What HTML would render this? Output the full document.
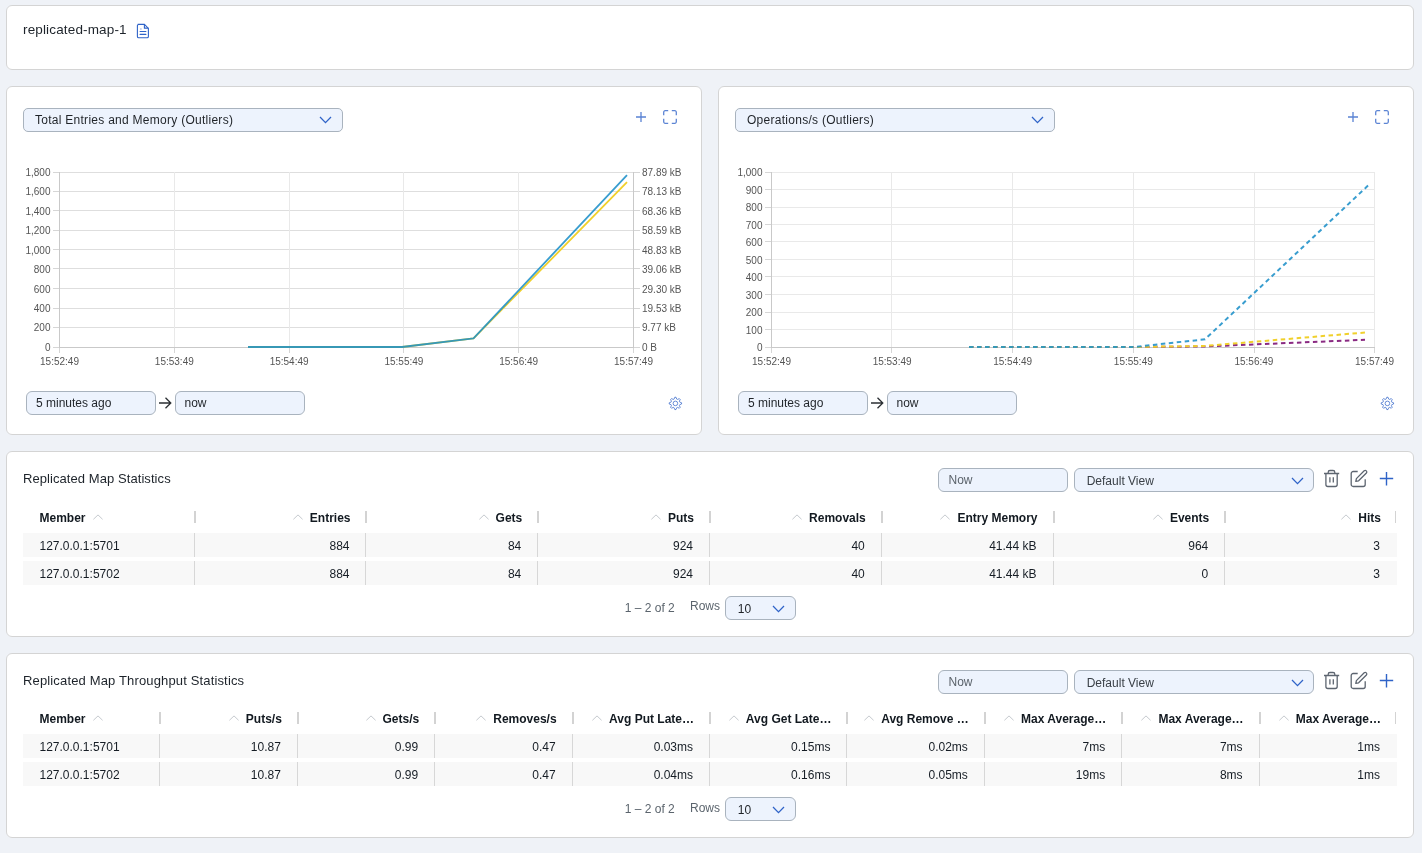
<!DOCTYPE html>
<html><head><meta charset="utf-8"><title>replicated-map-1</title>
<style>
html,body{margin:0;padding:0;}
body{width:1422px;height:853px;overflow:hidden;position:relative;background:#eff2f7;font-family:"Liberation Sans", sans-serif;}
</style></head><body><div style="position:absolute;left:0;top:0;width:1422px;height:853px;will-change:transform">
<div style="position:absolute;left:6px;top:5px;width:1408px;height:65px;background:#fff;border:1px solid #d4d4d4;border-radius:6px;box-sizing:border-box;"></div>
<div style="position:absolute;left:6px;top:86px;width:696px;height:349px;background:#fff;border:1px solid #d4d4d4;border-radius:6px;box-sizing:border-box;"></div>
<div style="position:absolute;left:718px;top:86px;width:696px;height:349px;background:#fff;border:1px solid #d4d4d4;border-radius:6px;box-sizing:border-box;"></div>
<div style="position:absolute;left:6px;top:451px;width:1408px;height:186px;background:#fff;border:1px solid #d4d4d4;border-radius:6px;box-sizing:border-box;"></div>
<div style="position:absolute;left:6px;top:653px;width:1408px;height:185px;background:#fff;border:1px solid #d4d4d4;border-radius:6px;box-sizing:border-box;"></div>
<div style="position:absolute;top:22.57px;font-size:13.5px;line-height:13.5px;color:#1d232a;font-weight:normal;white-space:nowrap;letter-spacing:0.15px;left:23px;">replicated-map-1</div>
<svg style="position:absolute;left:136px;top:23px;" width="14" height="16" viewBox="0 0 14 16"><path d="M1.7,1.4 H8.4 L12.4,5.4 V13.4 A1.3,1.3 0 0 1 11.1,14.7 H2.7 A1.3,1.3 0 0 1 1.4,13.4 V2.7 A1.3,1.3 0 0 1 2.7,1.4 Z" fill="none" stroke="#2f63c8" stroke-width="1.1"/>
<path d="M8.4,1.4 V5.1 H12.4" fill="none" stroke="#2f63c8" stroke-width="1.1"/>
<line x1="4.1" y1="8.5" x2="9.9" y2="8.5" stroke="#2f63c8" stroke-width="1.1" stroke-linecap="round"/>
<line x1="4.1" y1="11.4" x2="9.9" y2="11.4" stroke="#2f63c8" stroke-width="1.1" stroke-linecap="round"/>
<rect x="4.3" y="5.4" width="1.2" height="1.2" fill="#2f63c8" opacity="0.6"/></svg>
<div style="position:absolute;left:23px;top:108px;width:320px;height:24px;background:#edf3fd;border:1px solid #a9b3be;border-radius:5px;box-sizing:border-box;"></div>
<div style="position:absolute;top:113.84px;font-size:12px;line-height:12px;color:#1f2328;font-weight:normal;white-space:nowrap;letter-spacing:0.27px;left:35px;">Total Entries and Memory (Outliers)</div>
<svg style="position:absolute;left:318.0px;top:114.8px;" width="15" height="9.6" viewBox="0 0 15 9.6"><polyline points="2,2 7.5,7.6 13,2" fill="none" stroke="#2f63c8" stroke-width="1.3"/></svg>
<svg style="position:absolute;left:634px;top:110px;" width="14" height="14" viewBox="0 0 14 14"><path d="M7,2 V12 M2,7 H12" stroke="#2f63c8" stroke-width="1.3" fill="none" opacity="0.8"/></svg>
<svg style="position:absolute;left:662px;top:109px;" width="16" height="16" viewBox="0 0 16 16"><path d="M1.7,6.2 V3.2 A1.5,1.5 0 0 1 3.2,1.7 H6.2 M9.8,1.7 H12.8 A1.5,1.5 0 0 1 14.3,3.2 V6.2 M14.3,9.8 V12.8 A1.5,1.5 0 0 1 12.8,14.3 H9.8 M6.2,14.3 H3.2 A1.5,1.5 0 0 1 1.7,12.8 V9.8" stroke="#2f63c8" stroke-width="1.3" fill="none" opacity="0.78"/></svg>
<div style="position:absolute;left:26px;top:391px;width:130px;height:24px;background:#edf3fd;border:1px solid #a9b3be;border-radius:6px;box-sizing:border-box;"></div>
<div style="position:absolute;top:397.24px;font-size:12px;line-height:12px;color:#1f2328;font-weight:normal;white-space:nowrap;left:36px;">5 minutes ago</div>
<svg style="position:absolute;left:157px;top:396px;" width="16" height="14" viewBox="0 0 16 14"><path d="M2,7 H14 M8.5,1.8 L13.8,7 L8.5,12.2" stroke="#2b2f33" stroke-width="1.3" fill="none"/></svg>
<div style="position:absolute;left:175px;top:391px;width:130px;height:24px;background:#edf3fd;border:1px solid #a9b3be;border-radius:6px;box-sizing:border-box;"></div>
<div style="position:absolute;top:397.24px;font-size:12px;line-height:12px;color:#1f2328;font-weight:normal;white-space:nowrap;left:184.5px;">now</div>
<svg style="position:absolute;left:667px;top:395px;" width="17" height="17" viewBox="0 0 17 17"><polygon points="7.79,2.23 9.01,2.23 9.71,4.09 10.52,4.43 12.33,3.61 13.19,4.47 12.37,6.28 12.71,7.09 14.57,7.79 14.57,9.01 12.71,9.71 12.37,10.52 13.19,12.33 12.33,13.19 10.52,12.37 9.71,12.71 9.01,14.57 7.79,14.57 7.09,12.71 6.28,12.37 4.47,13.19 3.61,12.33 4.43,10.52 4.09,9.71 2.23,9.01 2.23,7.79 4.09,7.09 4.43,6.28 3.61,4.47 4.47,3.61 6.28,4.43 7.09,4.09" fill="none" stroke="#2f63c8" stroke-width="1" stroke-linejoin="round" opacity="0.72"/><circle cx="8.4" cy="8.4" r="2.3" fill="none" stroke="#2f63c8" stroke-width="1" opacity="0.72"/></svg>
<div style="position:absolute;left:735px;top:108px;width:320px;height:24px;background:#edf3fd;border:1px solid #a9b3be;border-radius:5px;box-sizing:border-box;"></div>
<div style="position:absolute;top:113.84px;font-size:12px;line-height:12px;color:#1f2328;font-weight:normal;white-space:nowrap;letter-spacing:0.27px;left:747px;">Operations/s (Outliers)</div>
<svg style="position:absolute;left:1030.0px;top:114.8px;" width="15" height="9.6" viewBox="0 0 15 9.6"><polyline points="2,2 7.5,7.6 13,2" fill="none" stroke="#2f63c8" stroke-width="1.3"/></svg>
<svg style="position:absolute;left:1346px;top:110px;" width="14" height="14" viewBox="0 0 14 14"><path d="M7,2 V12 M2,7 H12" stroke="#2f63c8" stroke-width="1.3" fill="none" opacity="0.8"/></svg>
<svg style="position:absolute;left:1374px;top:109px;" width="16" height="16" viewBox="0 0 16 16"><path d="M1.7,6.2 V3.2 A1.5,1.5 0 0 1 3.2,1.7 H6.2 M9.8,1.7 H12.8 A1.5,1.5 0 0 1 14.3,3.2 V6.2 M14.3,9.8 V12.8 A1.5,1.5 0 0 1 12.8,14.3 H9.8 M6.2,14.3 H3.2 A1.5,1.5 0 0 1 1.7,12.8 V9.8" stroke="#2f63c8" stroke-width="1.3" fill="none" opacity="0.78"/></svg>
<div style="position:absolute;left:738px;top:391px;width:130px;height:24px;background:#edf3fd;border:1px solid #a9b3be;border-radius:6px;box-sizing:border-box;"></div>
<div style="position:absolute;top:397.24px;font-size:12px;line-height:12px;color:#1f2328;font-weight:normal;white-space:nowrap;left:748px;">5 minutes ago</div>
<svg style="position:absolute;left:869px;top:396px;" width="16" height="14" viewBox="0 0 16 14"><path d="M2,7 H14 M8.5,1.8 L13.8,7 L8.5,12.2" stroke="#2b2f33" stroke-width="1.3" fill="none"/></svg>
<div style="position:absolute;left:887px;top:391px;width:130px;height:24px;background:#edf3fd;border:1px solid #a9b3be;border-radius:6px;box-sizing:border-box;"></div>
<div style="position:absolute;top:397.24px;font-size:12px;line-height:12px;color:#1f2328;font-weight:normal;white-space:nowrap;left:896.5px;">now</div>
<svg style="position:absolute;left:1379px;top:395px;" width="17" height="17" viewBox="0 0 17 17"><polygon points="7.79,2.23 9.01,2.23 9.71,4.09 10.52,4.43 12.33,3.61 13.19,4.47 12.37,6.28 12.71,7.09 14.57,7.79 14.57,9.01 12.71,9.71 12.37,10.52 13.19,12.33 12.33,13.19 10.52,12.37 9.71,12.71 9.01,14.57 7.79,14.57 7.09,12.71 6.28,12.37 4.47,13.19 3.61,12.33 4.43,10.52 4.09,9.71 2.23,9.01 2.23,7.79 4.09,7.09 4.43,6.28 3.61,4.47 4.47,3.61 6.28,4.43 7.09,4.09" fill="none" stroke="#2f63c8" stroke-width="1" stroke-linejoin="round" opacity="0.72"/><circle cx="8.4" cy="8.4" r="2.3" fill="none" stroke="#2f63c8" stroke-width="1" opacity="0.72"/></svg>
<svg style="position:absolute;left:0;top:0;font-family:"Liberation Sans", sans-serif" width="1422" height="853"><rect x="59" y="172" width="575" height="1" fill="#dedede"/><rect x="53" y="172" width="6" height="1" fill="#d6d6d6"/><rect x="634" y="172" width="6" height="1" fill="#d6d6d6"/><rect x="59" y="191" width="575" height="1" fill="#dedede"/><rect x="53" y="191" width="6" height="1" fill="#d6d6d6"/><rect x="634" y="191" width="6" height="1" fill="#d6d6d6"/><rect x="59" y="210" width="575" height="1" fill="#dedede"/><rect x="53" y="210" width="6" height="1" fill="#d6d6d6"/><rect x="634" y="210" width="6" height="1" fill="#d6d6d6"/><rect x="59" y="230" width="575" height="1" fill="#dedede"/><rect x="53" y="230" width="6" height="1" fill="#d6d6d6"/><rect x="634" y="230" width="6" height="1" fill="#d6d6d6"/><rect x="59" y="249" width="575" height="1" fill="#dedede"/><rect x="53" y="249" width="6" height="1" fill="#d6d6d6"/><rect x="634" y="249" width="6" height="1" fill="#d6d6d6"/><rect x="59" y="268" width="575" height="1" fill="#dedede"/><rect x="53" y="268" width="6" height="1" fill="#d6d6d6"/><rect x="634" y="268" width="6" height="1" fill="#d6d6d6"/><rect x="59" y="288" width="575" height="1" fill="#dedede"/><rect x="53" y="288" width="6" height="1" fill="#d6d6d6"/><rect x="634" y="288" width="6" height="1" fill="#d6d6d6"/><rect x="59" y="308" width="575" height="1" fill="#dedede"/><rect x="53" y="308" width="6" height="1" fill="#d6d6d6"/><rect x="634" y="308" width="6" height="1" fill="#d6d6d6"/><rect x="59" y="327" width="575" height="1" fill="#dedede"/><rect x="53" y="327" width="6" height="1" fill="#d6d6d6"/><rect x="634" y="327" width="6" height="1" fill="#d6d6d6"/><rect x="53" y="347" width="6" height="1" fill="#d6d6d6"/><rect x="634" y="347" width="6" height="1" fill="#d6d6d6"/><rect x="174" y="172" width="1" height="175" fill="#e9e9e9"/><rect x="289" y="172" width="1" height="175" fill="#e9e9e9"/><rect x="403" y="172" width="1" height="175" fill="#e9e9e9"/><rect x="518" y="172" width="1" height="175" fill="#e9e9e9"/><rect x="59" y="348" width="1" height="5" fill="#d6d6d6"/><rect x="174" y="348" width="1" height="5" fill="#d6d6d6"/><rect x="289" y="348" width="1" height="5" fill="#d6d6d6"/><rect x="403" y="348" width="1" height="5" fill="#d6d6d6"/><rect x="518" y="348" width="1" height="5" fill="#d6d6d6"/><rect x="633" y="348" width="1" height="5" fill="#d6d6d6"/><rect x="59" y="172" width="1" height="176" fill="#c9c9c9"/><rect x="633" y="172" width="1" height="176" fill="#c9c9c9"/><rect x="59" y="347" width="575" height="1" fill="#c9c9c9"/><text x="50.5" y="176.0" text-anchor="end" font-size="10" fill="#555555">1,800</text><text x="50.5" y="195.4" text-anchor="end" font-size="10" fill="#555555">1,600</text><text x="50.5" y="214.9" text-anchor="end" font-size="10" fill="#555555">1,400</text><text x="50.5" y="234.3" text-anchor="end" font-size="10" fill="#555555">1,200</text><text x="50.5" y="253.7" text-anchor="end" font-size="10" fill="#555555">1,000</text><text x="50.5" y="273.2" text-anchor="end" font-size="10" fill="#555555">800</text><text x="50.5" y="292.6" text-anchor="end" font-size="10" fill="#555555">600</text><text x="50.5" y="312.0" text-anchor="end" font-size="10" fill="#555555">400</text><text x="50.5" y="331.4" text-anchor="end" font-size="10" fill="#555555">200</text><text x="50.5" y="350.9" text-anchor="end" font-size="10" fill="#555555">0</text><text x="642" y="176.0" text-anchor="start" font-size="10" fill="#555555">87.89 kB</text><text x="642" y="195.4" text-anchor="start" font-size="10" fill="#555555">78.13 kB</text><text x="642" y="214.9" text-anchor="start" font-size="10" fill="#555555">68.36 kB</text><text x="642" y="234.3" text-anchor="start" font-size="10" fill="#555555">58.59 kB</text><text x="642" y="253.7" text-anchor="start" font-size="10" fill="#555555">48.83 kB</text><text x="642" y="273.2" text-anchor="start" font-size="10" fill="#555555">39.06 kB</text><text x="642" y="292.6" text-anchor="start" font-size="10" fill="#555555">29.30 kB</text><text x="642" y="312.0" text-anchor="start" font-size="10" fill="#555555">19.53 kB</text><text x="642" y="331.4" text-anchor="start" font-size="10" fill="#555555">9.77 kB</text><text x="642" y="350.9" text-anchor="start" font-size="10" fill="#555555">0 B</text><text x="59.5" y="365" text-anchor="middle" font-size="10" fill="#555555">15:52:49</text><text x="174.3" y="365" text-anchor="middle" font-size="10" fill="#555555">15:53:49</text><text x="289.1" y="365" text-anchor="middle" font-size="10" fill="#555555">15:54:49</text><text x="403.9" y="365" text-anchor="middle" font-size="10" fill="#555555">15:55:49</text><text x="518.7" y="365" text-anchor="middle" font-size="10" fill="#555555">15:56:49</text><text x="633.5" y="365" text-anchor="middle" font-size="10" fill="#555555">15:57:49</text><rect x="771" y="172" width="604" height="1" fill="#e9e9e9"/><rect x="765" y="172" width="6" height="1" fill="#d6d6d6"/><rect x="771" y="189" width="604" height="1" fill="#e9e9e9"/><rect x="765" y="189" width="6" height="1" fill="#d6d6d6"/><rect x="771" y="207" width="604" height="1" fill="#e9e9e9"/><rect x="765" y="207" width="6" height="1" fill="#d6d6d6"/><rect x="771" y="224" width="604" height="1" fill="#e9e9e9"/><rect x="765" y="224" width="6" height="1" fill="#d6d6d6"/><rect x="771" y="241" width="604" height="1" fill="#e9e9e9"/><rect x="765" y="241" width="6" height="1" fill="#d6d6d6"/><rect x="771" y="259" width="604" height="1" fill="#e9e9e9"/><rect x="765" y="259" width="6" height="1" fill="#d6d6d6"/><rect x="771" y="276" width="604" height="1" fill="#e9e9e9"/><rect x="765" y="276" width="6" height="1" fill="#d6d6d6"/><rect x="771" y="294" width="604" height="1" fill="#e9e9e9"/><rect x="765" y="294" width="6" height="1" fill="#d6d6d6"/><rect x="771" y="312" width="604" height="1" fill="#e9e9e9"/><rect x="765" y="312" width="6" height="1" fill="#d6d6d6"/><rect x="771" y="329" width="604" height="1" fill="#e9e9e9"/><rect x="765" y="329" width="6" height="1" fill="#d6d6d6"/><rect x="765" y="347" width="6" height="1" fill="#d6d6d6"/><rect x="891" y="172" width="1" height="175" fill="#e9e9e9"/><rect x="1012" y="172" width="1" height="175" fill="#e9e9e9"/><rect x="1133" y="172" width="1" height="175" fill="#e9e9e9"/><rect x="1254" y="172" width="1" height="175" fill="#e9e9e9"/><rect x="771" y="348" width="1" height="5" fill="#d6d6d6"/><rect x="891" y="348" width="1" height="5" fill="#d6d6d6"/><rect x="1012" y="348" width="1" height="5" fill="#d6d6d6"/><rect x="1133" y="348" width="1" height="5" fill="#d6d6d6"/><rect x="1254" y="348" width="1" height="5" fill="#d6d6d6"/><rect x="1374" y="348" width="1" height="5" fill="#d6d6d6"/><rect x="1374" y="172" width="1" height="175" fill="#e9e9e9"/><rect x="771" y="172" width="1" height="176" fill="#c9c9c9"/><rect x="771" y="347" width="604" height="1" fill="#c9c9c9"/><text x="762.5" y="176.0" text-anchor="end" font-size="10" fill="#555555">1,000</text><text x="762.5" y="193.5" text-anchor="end" font-size="10" fill="#555555">900</text><text x="762.5" y="211.0" text-anchor="end" font-size="10" fill="#555555">800</text><text x="762.5" y="228.5" text-anchor="end" font-size="10" fill="#555555">700</text><text x="762.5" y="246.0" text-anchor="end" font-size="10" fill="#555555">600</text><text x="762.5" y="263.5" text-anchor="end" font-size="10" fill="#555555">500</text><text x="762.5" y="281.0" text-anchor="end" font-size="10" fill="#555555">400</text><text x="762.5" y="298.5" text-anchor="end" font-size="10" fill="#555555">300</text><text x="762.5" y="316.0" text-anchor="end" font-size="10" fill="#555555">200</text><text x="762.5" y="333.5" text-anchor="end" font-size="10" fill="#555555">100</text><text x="762.5" y="351.0" text-anchor="end" font-size="10" fill="#555555">0</text><text x="771.5" y="365" text-anchor="middle" font-size="10" fill="#555555">15:52:49</text><text x="892.1" y="365" text-anchor="middle" font-size="10" fill="#555555">15:53:49</text><text x="1012.7" y="365" text-anchor="middle" font-size="10" fill="#555555">15:54:49</text><text x="1133.3" y="365" text-anchor="middle" font-size="10" fill="#555555">15:55:49</text><text x="1253.9" y="365" text-anchor="middle" font-size="10" fill="#555555">15:56:49</text><text x="1374.5" y="365" text-anchor="middle" font-size="10" fill="#555555">15:57:49</text><polyline points="248,347 402,347 473.5,338.4 627,182.2" fill="none" stroke="#f0d02c" stroke-width="1.8" stroke-linejoin="round"/><polyline points="248,347 402,347 473.5,338.4 627,175.2" fill="none" stroke="#1c90c8" stroke-width="1.8" stroke-linejoin="round" stroke-opacity="0.88"/><polyline points="969,347 1134,347 1204,346.5 1365,339.8" fill="none" stroke="#8a2a82" stroke-width="2" stroke-dasharray="4.5,3.5"/><polyline points="969,347 1134,347 1204,346 1365,332.5" fill="none" stroke="#f0d02c" stroke-width="2" stroke-dasharray="4.5,3.5"/><polyline points="969,347 1134,347 1205,339.3 1368,185.6" fill="none" stroke="#1c90c8" stroke-width="2" stroke-dasharray="4.5,3.5" stroke-opacity="0.88"/></svg>
<div style="position:absolute;top:472.40px;font-size:13px;line-height:13px;color:#1d232a;font-weight:normal;white-space:nowrap;letter-spacing:0.07px;left:23px;">Replicated Map Statistics</div>
<div style="position:absolute;left:938px;top:468px;width:130px;height:24px;background:#edf3fd;border:1px solid #a9b3be;border-radius:6px;box-sizing:border-box;"></div>
<div style="position:absolute;top:474.24px;font-size:12px;line-height:12px;color:#5b636b;font-weight:normal;white-space:nowrap;left:948.5px;">Now</div>
<div style="position:absolute;left:1074px;top:468px;width:240px;height:24px;background:#edf3fd;border:1px solid #a9b3be;border-radius:6px;box-sizing:border-box;"></div>
<div style="position:absolute;top:474.54px;font-size:12px;line-height:12px;color:#3a4047;font-weight:normal;white-space:nowrap;left:1086.7px;">Default View</div>
<svg style="position:absolute;left:1290.0px;top:475.7px;" width="15" height="9.6" viewBox="0 0 15 9.6"><polyline points="2,2 7.5,7.6 13,2" fill="none" stroke="#2f63c8" stroke-width="1.3"/></svg>
<svg style="position:absolute;left:1322px;top:468px;" width="20" height="20" viewBox="0 0 20 20"><path d="M2,5.5 H17.2 M6.2,5.5 V4.3 A1.8,1.8 0 0 1 8,2.5 H11 A1.8,1.8 0 0 1 12.8,4.3 V5.5 M3.9,5.5 V16.5 A2,2 0 0 0 5.9,18.5 H13.2 A2,2 0 0 0 15.2,16.5 V5.5 M7.9,9.3 V14.6 M11.3,9.3 V14.6" stroke="#5d6570" stroke-width="1.3" fill="none"/></svg>
<svg style="position:absolute;left:1348px;top:468px;" width="22" height="20" viewBox="0 0 22 20"><path d="M9.7,3.5 H5.2 A2,2 0 0 0 3.2,5.5 V16.5 A2,2 0 0 0 5.2,18.5 H15.2 A2,2 0 0 0 17.2,16.5 V11.2 M7.8,13.3 L8.4,10.6 L16.2,2.8 A1.56,1.56 0 0 1 18.4,5.0 L10.6,12.8 Z" stroke="#5d6570" stroke-width="1.3" fill="none" stroke-linejoin="round"/></svg>
<svg style="position:absolute;left:1378px;top:470px;" width="17" height="17" viewBox="0 0 17 17"><path d="M8.5,2 V15.5 M1.8,8.5 H15.2" stroke="#2f63c8" stroke-width="1.4" fill="none"/></svg>
<div style="position:absolute;left:194px;top:511px;width:2px;height:12px;background:#d3d3d3;"></div>
<div style="position:absolute;top:511.64px;font-size:12px;line-height:12px;color:#121920;font-weight:bold;white-space:nowrap;left:39.5px;">Member<span style="display:inline-block;width:7px"></span><svg width="10" height="6" viewBox="0 0 10 6" style="vertical-align:2px"><polyline points="0.4,5.3 5,0.9 9.6,5.3" fill="none" stroke="#c5c9ce" stroke-width="1"/></svg></div>
<div style="position:absolute;left:365px;top:511px;width:2px;height:12px;background:#d3d3d3;"></div>
<div style="position:absolute;top:511.64px;font-size:12px;line-height:12px;color:#121920;font-weight:bold;white-space:nowrap;right:1071.5px;"><svg width="10" height="6" viewBox="0 0 10 6" style="vertical-align:2px"><polyline points="0.4,5.3 5,0.9 9.6,5.3" fill="none" stroke="#c5c9ce" stroke-width="1"/></svg><span style="display:inline-block;width:7px"></span>Entries</div>
<div style="position:absolute;left:537px;top:511px;width:2px;height:12px;background:#d3d3d3;"></div>
<div style="position:absolute;top:511.64px;font-size:12px;line-height:12px;color:#121920;font-weight:bold;white-space:nowrap;right:899.75px;"><svg width="10" height="6" viewBox="0 0 10 6" style="vertical-align:2px"><polyline points="0.4,5.3 5,0.9 9.6,5.3" fill="none" stroke="#c5c9ce" stroke-width="1"/></svg><span style="display:inline-block;width:7px"></span>Gets</div>
<div style="position:absolute;left:709px;top:511px;width:2px;height:12px;background:#d3d3d3;"></div>
<div style="position:absolute;top:511.64px;font-size:12px;line-height:12px;color:#121920;font-weight:bold;white-space:nowrap;right:728.0px;"><svg width="10" height="6" viewBox="0 0 10 6" style="vertical-align:2px"><polyline points="0.4,5.3 5,0.9 9.6,5.3" fill="none" stroke="#c5c9ce" stroke-width="1"/></svg><span style="display:inline-block;width:7px"></span>Puts</div>
<div style="position:absolute;left:881px;top:511px;width:2px;height:12px;background:#d3d3d3;"></div>
<div style="position:absolute;top:511.64px;font-size:12px;line-height:12px;color:#121920;font-weight:bold;white-space:nowrap;right:556.25px;"><svg width="10" height="6" viewBox="0 0 10 6" style="vertical-align:2px"><polyline points="0.4,5.3 5,0.9 9.6,5.3" fill="none" stroke="#c5c9ce" stroke-width="1"/></svg><span style="display:inline-block;width:7px"></span>Removals</div>
<div style="position:absolute;left:1053px;top:511px;width:2px;height:12px;background:#d3d3d3;"></div>
<div style="position:absolute;top:511.64px;font-size:12px;line-height:12px;color:#121920;font-weight:bold;white-space:nowrap;right:384.5px;"><svg width="10" height="6" viewBox="0 0 10 6" style="vertical-align:2px"><polyline points="0.4,5.3 5,0.9 9.6,5.3" fill="none" stroke="#c5c9ce" stroke-width="1"/></svg><span style="display:inline-block;width:7px"></span>Entry Memory</div>
<div style="position:absolute;left:1224px;top:511px;width:2px;height:12px;background:#d3d3d3;"></div>
<div style="position:absolute;top:511.64px;font-size:12px;line-height:12px;color:#121920;font-weight:bold;white-space:nowrap;right:212.75px;"><svg width="10" height="6" viewBox="0 0 10 6" style="vertical-align:2px"><polyline points="0.4,5.3 5,0.9 9.6,5.3" fill="none" stroke="#c5c9ce" stroke-width="1"/></svg><span style="display:inline-block;width:7px"></span>Events</div>
<div style="position:absolute;left:1395px;top:511px;width:1px;height:12px;background:#d3d3d3;"></div>
<div style="position:absolute;top:511.64px;font-size:12px;line-height:12px;color:#121920;font-weight:bold;white-space:nowrap;right:41.0px;"><svg width="10" height="6" viewBox="0 0 10 6" style="vertical-align:2px"><polyline points="0.4,5.3 5,0.9 9.6,5.3" fill="none" stroke="#c5c9ce" stroke-width="1"/></svg><span style="display:inline-block;width:7px"></span>Hits</div>
<div style="position:absolute;left:23px;top:533px;width:1374px;height:24px;background:#f8f8f8;"></div>
<div style="position:absolute;left:194px;top:533px;width:1px;height:24px;background:#d7d7d7;"></div>
<div style="position:absolute;top:539.84px;font-size:12px;line-height:12px;color:#161d25;font-weight:normal;white-space:nowrap;left:39.5px;">127.0.0.1:5701</div>
<div style="position:absolute;left:365px;top:533px;width:1px;height:24px;background:#d7d7d7;"></div>
<div style="position:absolute;top:539.84px;font-size:12px;line-height:12px;color:#161d25;font-weight:normal;white-space:nowrap;right:1072.5px;">884</div>
<div style="position:absolute;left:537px;top:533px;width:1px;height:24px;background:#d7d7d7;"></div>
<div style="position:absolute;top:539.84px;font-size:12px;line-height:12px;color:#161d25;font-weight:normal;white-space:nowrap;right:900.75px;">84</div>
<div style="position:absolute;left:709px;top:533px;width:1px;height:24px;background:#d7d7d7;"></div>
<div style="position:absolute;top:539.84px;font-size:12px;line-height:12px;color:#161d25;font-weight:normal;white-space:nowrap;right:729.0px;">924</div>
<div style="position:absolute;left:881px;top:533px;width:1px;height:24px;background:#d7d7d7;"></div>
<div style="position:absolute;top:539.84px;font-size:12px;line-height:12px;color:#161d25;font-weight:normal;white-space:nowrap;right:557.25px;">40</div>
<div style="position:absolute;left:1053px;top:533px;width:1px;height:24px;background:#d7d7d7;"></div>
<div style="position:absolute;top:539.84px;font-size:12px;line-height:12px;color:#161d25;font-weight:normal;white-space:nowrap;right:385.5px;">41.44 kB</div>
<div style="position:absolute;left:1224px;top:533px;width:1px;height:24px;background:#d7d7d7;"></div>
<div style="position:absolute;top:539.84px;font-size:12px;line-height:12px;color:#161d25;font-weight:normal;white-space:nowrap;right:213.75px;">964</div>
<div style="position:absolute;top:539.84px;font-size:12px;line-height:12px;color:#161d25;font-weight:normal;white-space:nowrap;right:42.0px;">3</div>
<div style="position:absolute;left:23px;top:561px;width:1374px;height:24px;background:#f8f8f8;"></div>
<div style="position:absolute;left:194px;top:561px;width:1px;height:24px;background:#d7d7d7;"></div>
<div style="position:absolute;top:567.84px;font-size:12px;line-height:12px;color:#161d25;font-weight:normal;white-space:nowrap;left:39.5px;">127.0.0.1:5702</div>
<div style="position:absolute;left:365px;top:561px;width:1px;height:24px;background:#d7d7d7;"></div>
<div style="position:absolute;top:567.84px;font-size:12px;line-height:12px;color:#161d25;font-weight:normal;white-space:nowrap;right:1072.5px;">884</div>
<div style="position:absolute;left:537px;top:561px;width:1px;height:24px;background:#d7d7d7;"></div>
<div style="position:absolute;top:567.84px;font-size:12px;line-height:12px;color:#161d25;font-weight:normal;white-space:nowrap;right:900.75px;">84</div>
<div style="position:absolute;left:709px;top:561px;width:1px;height:24px;background:#d7d7d7;"></div>
<div style="position:absolute;top:567.84px;font-size:12px;line-height:12px;color:#161d25;font-weight:normal;white-space:nowrap;right:729.0px;">924</div>
<div style="position:absolute;left:881px;top:561px;width:1px;height:24px;background:#d7d7d7;"></div>
<div style="position:absolute;top:567.84px;font-size:12px;line-height:12px;color:#161d25;font-weight:normal;white-space:nowrap;right:557.25px;">40</div>
<div style="position:absolute;left:1053px;top:561px;width:1px;height:24px;background:#d7d7d7;"></div>
<div style="position:absolute;top:567.84px;font-size:12px;line-height:12px;color:#161d25;font-weight:normal;white-space:nowrap;right:385.5px;">41.44 kB</div>
<div style="position:absolute;left:1224px;top:561px;width:1px;height:24px;background:#d7d7d7;"></div>
<div style="position:absolute;top:567.84px;font-size:12px;line-height:12px;color:#161d25;font-weight:normal;white-space:nowrap;right:213.75px;">0</div>
<div style="position:absolute;top:567.84px;font-size:12px;line-height:12px;color:#161d25;font-weight:normal;white-space:nowrap;right:42.0px;">3</div>
<div style="position:absolute;top:602.34px;font-size:12px;line-height:12px;color:#5b646d;font-weight:normal;white-space:nowrap;left:624.7px;">1 – 2 of 2</div>
<div style="position:absolute;top:600.34px;font-size:12px;line-height:12px;color:#5b646d;font-weight:normal;white-space:nowrap;left:690px;">Rows</div>
<div style="position:absolute;left:725px;top:596px;width:71px;height:24px;background:#edf3fd;border:1px solid #a9b3be;border-radius:6px;box-sizing:border-box;"></div>
<div style="position:absolute;top:602.84px;font-size:12px;line-height:12px;color:#1f2328;font-weight:normal;white-space:nowrap;left:737.8px;">10</div>
<svg style="position:absolute;left:771.1px;top:603.5px;" width="15" height="9.6" viewBox="0 0 15 9.6"><polyline points="2,2 7.5,7.6 13,2" fill="none" stroke="#2f63c8" stroke-width="1.3"/></svg>
<div style="position:absolute;top:673.90px;font-size:13px;line-height:13px;color:#1d232a;font-weight:normal;white-space:nowrap;letter-spacing:0.15px;left:23px;">Replicated Map Throughput Statistics</div>
<div style="position:absolute;left:938px;top:670px;width:130px;height:24px;background:#edf3fd;border:1px solid #a9b3be;border-radius:6px;box-sizing:border-box;"></div>
<div style="position:absolute;top:676.24px;font-size:12px;line-height:12px;color:#5b636b;font-weight:normal;white-space:nowrap;left:948.5px;">Now</div>
<div style="position:absolute;left:1074px;top:670px;width:240px;height:24px;background:#edf3fd;border:1px solid #a9b3be;border-radius:6px;box-sizing:border-box;"></div>
<div style="position:absolute;top:676.54px;font-size:12px;line-height:12px;color:#3a4047;font-weight:normal;white-space:nowrap;left:1086.7px;">Default View</div>
<svg style="position:absolute;left:1290.0px;top:677.7px;" width="15" height="9.6" viewBox="0 0 15 9.6"><polyline points="2,2 7.5,7.6 13,2" fill="none" stroke="#2f63c8" stroke-width="1.3"/></svg>
<svg style="position:absolute;left:1322px;top:670px;" width="20" height="20" viewBox="0 0 20 20"><path d="M2,5.5 H17.2 M6.2,5.5 V4.3 A1.8,1.8 0 0 1 8,2.5 H11 A1.8,1.8 0 0 1 12.8,4.3 V5.5 M3.9,5.5 V16.5 A2,2 0 0 0 5.9,18.5 H13.2 A2,2 0 0 0 15.2,16.5 V5.5 M7.9,9.3 V14.6 M11.3,9.3 V14.6" stroke="#5d6570" stroke-width="1.3" fill="none"/></svg>
<svg style="position:absolute;left:1348px;top:670px;" width="22" height="20" viewBox="0 0 22 20"><path d="M9.7,3.5 H5.2 A2,2 0 0 0 3.2,5.5 V16.5 A2,2 0 0 0 5.2,18.5 H15.2 A2,2 0 0 0 17.2,16.5 V11.2 M7.8,13.3 L8.4,10.6 L16.2,2.8 A1.56,1.56 0 0 1 18.4,5.0 L10.6,12.8 Z" stroke="#5d6570" stroke-width="1.3" fill="none" stroke-linejoin="round"/></svg>
<svg style="position:absolute;left:1378px;top:672px;" width="17" height="17" viewBox="0 0 17 17"><path d="M8.5,2 V15.5 M1.8,8.5 H15.2" stroke="#2f63c8" stroke-width="1.4" fill="none"/></svg>
<div style="position:absolute;left:159px;top:712px;width:2px;height:12px;background:#d3d3d3;"></div>
<div style="position:absolute;top:712.64px;font-size:12px;line-height:12px;color:#121920;font-weight:bold;white-space:nowrap;left:39.5px;">Member<span style="display:inline-block;width:7px"></span><svg width="10" height="6" viewBox="0 0 10 6" style="vertical-align:2px"><polyline points="0.4,5.3 5,0.9 9.6,5.3" fill="none" stroke="#c5c9ce" stroke-width="1"/></svg></div>
<div style="position:absolute;left:297px;top:712px;width:2px;height:12px;background:#d3d3d3;"></div>
<div style="position:absolute;top:712.64px;font-size:12px;line-height:12px;color:#121920;font-weight:bold;white-space:nowrap;right:1140.2px;"><svg width="10" height="6" viewBox="0 0 10 6" style="vertical-align:2px"><polyline points="0.4,5.3 5,0.9 9.6,5.3" fill="none" stroke="#c5c9ce" stroke-width="1"/></svg><span style="display:inline-block;width:7px"></span>Puts/s</div>
<div style="position:absolute;left:434px;top:712px;width:2px;height:12px;background:#d3d3d3;"></div>
<div style="position:absolute;top:712.64px;font-size:12px;line-height:12px;color:#121920;font-weight:bold;white-space:nowrap;right:1002.8px;"><svg width="10" height="6" viewBox="0 0 10 6" style="vertical-align:2px"><polyline points="0.4,5.3 5,0.9 9.6,5.3" fill="none" stroke="#c5c9ce" stroke-width="1"/></svg><span style="display:inline-block;width:7px"></span>Gets/s</div>
<div style="position:absolute;left:572px;top:712px;width:2px;height:12px;background:#d3d3d3;"></div>
<div style="position:absolute;top:712.64px;font-size:12px;line-height:12px;color:#121920;font-weight:bold;white-space:nowrap;right:865.4px;"><svg width="10" height="6" viewBox="0 0 10 6" style="vertical-align:2px"><polyline points="0.4,5.3 5,0.9 9.6,5.3" fill="none" stroke="#c5c9ce" stroke-width="1"/></svg><span style="display:inline-block;width:7px"></span>Removes/s</div>
<div style="position:absolute;left:709px;top:712px;width:2px;height:12px;background:#d3d3d3;"></div>
<div style="position:absolute;top:712.64px;font-size:12px;line-height:12px;color:#121920;font-weight:bold;white-space:nowrap;right:728.0px;"><svg width="10" height="6" viewBox="0 0 10 6" style="vertical-align:2px"><polyline points="0.4,5.3 5,0.9 9.6,5.3" fill="none" stroke="#c5c9ce" stroke-width="1"/></svg><span style="display:inline-block;width:7px"></span>Avg Put Late…</div>
<div style="position:absolute;left:846px;top:712px;width:2px;height:12px;background:#d3d3d3;"></div>
<div style="position:absolute;top:712.64px;font-size:12px;line-height:12px;color:#121920;font-weight:bold;white-space:nowrap;right:590.5999999999999px;"><svg width="10" height="6" viewBox="0 0 10 6" style="vertical-align:2px"><polyline points="0.4,5.3 5,0.9 9.6,5.3" fill="none" stroke="#c5c9ce" stroke-width="1"/></svg><span style="display:inline-block;width:7px"></span>Avg Get Late…</div>
<div style="position:absolute;left:984px;top:712px;width:2px;height:12px;background:#d3d3d3;"></div>
<div style="position:absolute;top:712.64px;font-size:12px;line-height:12px;color:#121920;font-weight:bold;white-space:nowrap;right:453.19999999999993px;"><svg width="10" height="6" viewBox="0 0 10 6" style="vertical-align:2px"><polyline points="0.4,5.3 5,0.9 9.6,5.3" fill="none" stroke="#c5c9ce" stroke-width="1"/></svg><span style="display:inline-block;width:7px"></span>Avg Remove …</div>
<div style="position:absolute;left:1121px;top:712px;width:2px;height:12px;background:#d3d3d3;"></div>
<div style="position:absolute;top:712.64px;font-size:12px;line-height:12px;color:#121920;font-weight:bold;white-space:nowrap;right:315.79999999999995px;"><svg width="10" height="6" viewBox="0 0 10 6" style="vertical-align:2px"><polyline points="0.4,5.3 5,0.9 9.6,5.3" fill="none" stroke="#c5c9ce" stroke-width="1"/></svg><span style="display:inline-block;width:7px"></span>Max Average…</div>
<div style="position:absolute;left:1259px;top:712px;width:2px;height:12px;background:#d3d3d3;"></div>
<div style="position:absolute;top:712.64px;font-size:12px;line-height:12px;color:#121920;font-weight:bold;white-space:nowrap;right:178.39999999999986px;"><svg width="10" height="6" viewBox="0 0 10 6" style="vertical-align:2px"><polyline points="0.4,5.3 5,0.9 9.6,5.3" fill="none" stroke="#c5c9ce" stroke-width="1"/></svg><span style="display:inline-block;width:7px"></span>Max Average…</div>
<div style="position:absolute;left:1395px;top:712px;width:1px;height:12px;background:#d3d3d3;"></div>
<div style="position:absolute;top:712.64px;font-size:12px;line-height:12px;color:#121920;font-weight:bold;white-space:nowrap;right:41.0px;"><svg width="10" height="6" viewBox="0 0 10 6" style="vertical-align:2px"><polyline points="0.4,5.3 5,0.9 9.6,5.3" fill="none" stroke="#c5c9ce" stroke-width="1"/></svg><span style="display:inline-block;width:7px"></span>Max Average…</div>
<div style="position:absolute;left:23px;top:734px;width:1374px;height:24px;background:#f8f8f8;"></div>
<div style="position:absolute;left:159px;top:734px;width:1px;height:24px;background:#d7d7d7;"></div>
<div style="position:absolute;top:740.84px;font-size:12px;line-height:12px;color:#161d25;font-weight:normal;white-space:nowrap;left:39.5px;">127.0.0.1:5701</div>
<div style="position:absolute;left:297px;top:734px;width:1px;height:24px;background:#d7d7d7;"></div>
<div style="position:absolute;top:740.84px;font-size:12px;line-height:12px;color:#161d25;font-weight:normal;white-space:nowrap;right:1141.2px;">10.87</div>
<div style="position:absolute;left:434px;top:734px;width:1px;height:24px;background:#d7d7d7;"></div>
<div style="position:absolute;top:740.84px;font-size:12px;line-height:12px;color:#161d25;font-weight:normal;white-space:nowrap;right:1003.8px;">0.99</div>
<div style="position:absolute;left:572px;top:734px;width:1px;height:24px;background:#d7d7d7;"></div>
<div style="position:absolute;top:740.84px;font-size:12px;line-height:12px;color:#161d25;font-weight:normal;white-space:nowrap;right:866.4px;">0.47</div>
<div style="position:absolute;left:709px;top:734px;width:1px;height:24px;background:#d7d7d7;"></div>
<div style="position:absolute;top:740.84px;font-size:12px;line-height:12px;color:#161d25;font-weight:normal;white-space:nowrap;right:729.0px;">0.03ms</div>
<div style="position:absolute;left:846px;top:734px;width:1px;height:24px;background:#d7d7d7;"></div>
<div style="position:absolute;top:740.84px;font-size:12px;line-height:12px;color:#161d25;font-weight:normal;white-space:nowrap;right:591.5999999999999px;">0.15ms</div>
<div style="position:absolute;left:984px;top:734px;width:1px;height:24px;background:#d7d7d7;"></div>
<div style="position:absolute;top:740.84px;font-size:12px;line-height:12px;color:#161d25;font-weight:normal;white-space:nowrap;right:454.19999999999993px;">0.02ms</div>
<div style="position:absolute;left:1121px;top:734px;width:1px;height:24px;background:#d7d7d7;"></div>
<div style="position:absolute;top:740.84px;font-size:12px;line-height:12px;color:#161d25;font-weight:normal;white-space:nowrap;right:316.79999999999995px;">7ms</div>
<div style="position:absolute;left:1259px;top:734px;width:1px;height:24px;background:#d7d7d7;"></div>
<div style="position:absolute;top:740.84px;font-size:12px;line-height:12px;color:#161d25;font-weight:normal;white-space:nowrap;right:179.39999999999986px;">7ms</div>
<div style="position:absolute;top:740.84px;font-size:12px;line-height:12px;color:#161d25;font-weight:normal;white-space:nowrap;right:42.0px;">1ms</div>
<div style="position:absolute;left:23px;top:762px;width:1374px;height:24px;background:#f8f8f8;"></div>
<div style="position:absolute;left:159px;top:762px;width:1px;height:24px;background:#d7d7d7;"></div>
<div style="position:absolute;top:768.84px;font-size:12px;line-height:12px;color:#161d25;font-weight:normal;white-space:nowrap;left:39.5px;">127.0.0.1:5702</div>
<div style="position:absolute;left:297px;top:762px;width:1px;height:24px;background:#d7d7d7;"></div>
<div style="position:absolute;top:768.84px;font-size:12px;line-height:12px;color:#161d25;font-weight:normal;white-space:nowrap;right:1141.2px;">10.87</div>
<div style="position:absolute;left:434px;top:762px;width:1px;height:24px;background:#d7d7d7;"></div>
<div style="position:absolute;top:768.84px;font-size:12px;line-height:12px;color:#161d25;font-weight:normal;white-space:nowrap;right:1003.8px;">0.99</div>
<div style="position:absolute;left:572px;top:762px;width:1px;height:24px;background:#d7d7d7;"></div>
<div style="position:absolute;top:768.84px;font-size:12px;line-height:12px;color:#161d25;font-weight:normal;white-space:nowrap;right:866.4px;">0.47</div>
<div style="position:absolute;left:709px;top:762px;width:1px;height:24px;background:#d7d7d7;"></div>
<div style="position:absolute;top:768.84px;font-size:12px;line-height:12px;color:#161d25;font-weight:normal;white-space:nowrap;right:729.0px;">0.04ms</div>
<div style="position:absolute;left:846px;top:762px;width:1px;height:24px;background:#d7d7d7;"></div>
<div style="position:absolute;top:768.84px;font-size:12px;line-height:12px;color:#161d25;font-weight:normal;white-space:nowrap;right:591.5999999999999px;">0.16ms</div>
<div style="position:absolute;left:984px;top:762px;width:1px;height:24px;background:#d7d7d7;"></div>
<div style="position:absolute;top:768.84px;font-size:12px;line-height:12px;color:#161d25;font-weight:normal;white-space:nowrap;right:454.19999999999993px;">0.05ms</div>
<div style="position:absolute;left:1121px;top:762px;width:1px;height:24px;background:#d7d7d7;"></div>
<div style="position:absolute;top:768.84px;font-size:12px;line-height:12px;color:#161d25;font-weight:normal;white-space:nowrap;right:316.79999999999995px;">19ms</div>
<div style="position:absolute;left:1259px;top:762px;width:1px;height:24px;background:#d7d7d7;"></div>
<div style="position:absolute;top:768.84px;font-size:12px;line-height:12px;color:#161d25;font-weight:normal;white-space:nowrap;right:179.39999999999986px;">8ms</div>
<div style="position:absolute;top:768.84px;font-size:12px;line-height:12px;color:#161d25;font-weight:normal;white-space:nowrap;right:42.0px;">1ms</div>
<div style="position:absolute;top:803.34px;font-size:12px;line-height:12px;color:#5b646d;font-weight:normal;white-space:nowrap;left:624.7px;">1 – 2 of 2</div>
<div style="position:absolute;top:802.34px;font-size:12px;line-height:12px;color:#5b646d;font-weight:normal;white-space:nowrap;left:690px;">Rows</div>
<div style="position:absolute;left:725px;top:797px;width:71px;height:24px;background:#edf3fd;border:1px solid #a9b3be;border-radius:6px;box-sizing:border-box;"></div>
<div style="position:absolute;top:803.84px;font-size:12px;line-height:12px;color:#1f2328;font-weight:normal;white-space:nowrap;left:737.8px;">10</div>
<svg style="position:absolute;left:771.1px;top:804.5px;" width="15" height="9.6" viewBox="0 0 15 9.6"><polyline points="2,2 7.5,7.6 13,2" fill="none" stroke="#2f63c8" stroke-width="1.3"/></svg>
</div></body></html>
